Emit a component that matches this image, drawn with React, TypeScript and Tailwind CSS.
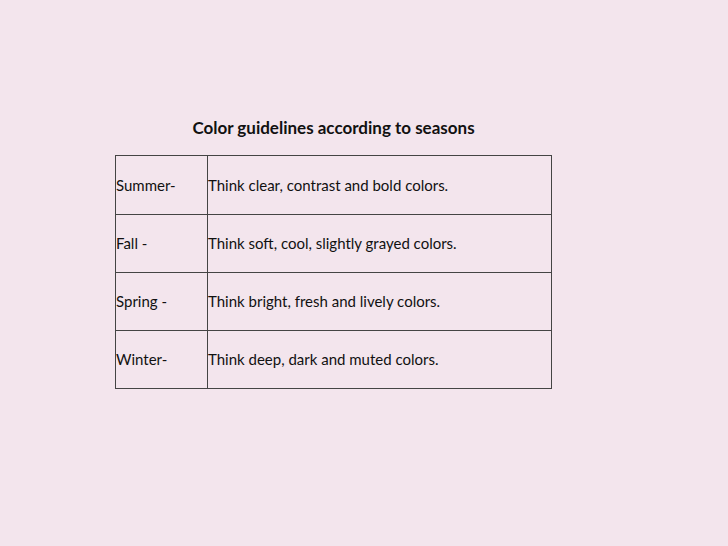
const rows = [
  ['Summer-', 'Think clear, contrast and bold colors.'],
  ['Fall -', 'Think soft, cool, slightly grayed colors.'],
  ['Spring -', 'Think bright, fresh and lively colors.'],
  ['Winter-', 'Think deep, dark and muted colors.'],
]

export default function App() {
  return (
    <div
      className="w-[728px] h-[546px] bg-[#f3e5ed] text-[#111] pt-[116px] pl-[115px]"
      style={{ fontFamily: 'Lato, "Open Sans", sans-serif' }}
    >
      <div className="w-[437px]">
        <h1 className="text-center font-bold text-[17px] leading-[24px] h-[39px]">
          Color guidelines according to seasons
        </h1>
        <div className="border border-[#444]">
          {rows.map(([season, text], i) => (
            <div
              key={season}
              className={`flex h-[58px] items-center text-[15px] ${i > 0 ? 'border-t border-[#444]' : ''}`}
            >
              <div className="w-[92px] h-full flex items-center border-r border-[#444]">
                {season}
              </div>
              <div>{text}</div>
            </div>
          ))}
        </div>
      </div>
    </div>
  )
}
